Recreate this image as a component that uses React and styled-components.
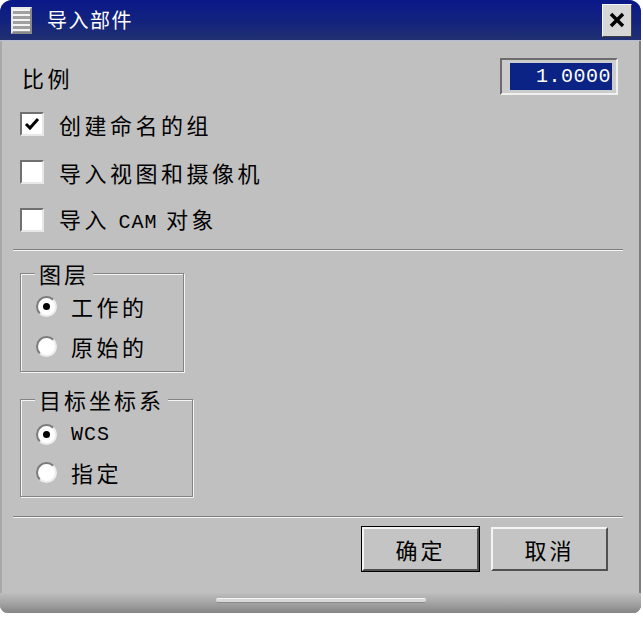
import React from 'react'
import styled, { createGlobalStyle } from 'styled-components'

const GlobalStyle = createGlobalStyle`
  body {
    margin: 0;
    background: #fff;
    font-family: "Noto Sans CJK SC", "Noto Sans", sans-serif;
  }
`

const Window = styled.div`
  width: 641px;
  height: 613px;
  display: flex;
  flex-direction: column;
  background: #c0c0c0;
  border-radius: 12px 12px 8px 8px;
  overflow: hidden;
  box-shadow: inset 2px 0 0 #a8a8a8, inset -2px 0 0 #7c7c7c;
`

const TitleBar = styled.div`
  height: 40px;
  display: flex;
  align-items: center;
  padding: 0 9px 0 11px;
  background: linear-gradient(180deg, #0a1889 0%, #13237d 55%, #213070 100%);
  border-bottom: 1px solid #b4bcd4;
`

const MenuIcon = styled.div`
  width: 21px;
  height: 27px;
  box-sizing: border-box;
  border: 2px solid #e8e8e8;
  border-right-color: #8a8a8a;
  border-bottom-color: #8a8a8a;
  background: repeating-linear-gradient(180deg, #f4f4f4 0 2px, #a0a0a0 2px 5px);
`

const Title = styled.span`
  margin-left: 15px;
  color: #fff;
  font-size: 20px;
  letter-spacing: 1.5px;
  line-height: 1;
`

const CloseButton = styled.div`
  margin-left: auto;
  width: 30px;
  height: 33px;
  box-sizing: border-box;
  display: flex;
  align-items: center;
  justify-content: center;
  background: #d6d6d6;
  border: 1px solid #f4f4f4;
  border-right-color: #404040;
  border-bottom-color: #404040;
`

const Body = styled.div`
  flex: 1;
  display: flex;
  flex-direction: column;
  padding-top: 17px;
`

const Text = styled.span`
  font-size: 22px;
  letter-spacing: 3.5px;
  color: #000;
  line-height: 22px;
`

const Mono = styled.span`
  font-family: "Liberation Mono", monospace;
  font-size: 20px;
  letter-spacing: 1px;
`

const ScaleRow = styled.div`
  height: 37px;
  display: flex;
  align-items: center;
  justify-content: space-between;
  padding: 0 23px 0 22px;
`

const NumberField = styled.div`
  width: 118px;
  height: 37px;
  box-sizing: border-box;
  padding: 3px 4px 3px 8px;
  display: flex;
  background: #cccccc;
  border: 2px solid #6c6c6c;
  border-right-color: #f0f0f0;
  border-bottom-color: #f0f0f0;
`

const Selection = styled.div`
  flex: 1;
  display: flex;
  align-items: center;
  justify-content: flex-end;
  padding-right: 1px;
  background: #0b2384;
  color: #fff;
  font-family: "Liberation Mono", monospace;
  font-size: 20px;
  letter-spacing: 0.5px;
`

const CheckList = styled.div`
  margin-top: 5px;
`

const CheckRow = styled.label`
  height: 48px;
  display: flex;
  align-items: center;
  gap: 15px;
  padding-left: 20px;
`

const Box = styled.span`
  width: 24px;
  height: 24px;
  box-sizing: border-box;
  display: flex;
  align-items: center;
  justify-content: center;
  background: #fff;
  border: 2px solid #707070;
  border-right-color: #e8e8e8;
  border-bottom-color: #e8e8e8;
`

const Separator = styled.div`
  margin: ${p => p.$top}px 18px 0 13px;
  height: 1px;
  background: #7e7e7e;
  border-bottom: 1px solid #f4f4f4;
`

const Group = styled.fieldset`
  margin: ${p => p.$top}px 0 0 20px;
  width: ${p => p.$width}px;
  box-sizing: border-box;
  padding: ${p => p.$pad}px 0 5px 15px;
  border: 1px solid #848484;
  box-shadow: inset 1px 1px 0 #f4f4f4, 1px 1px 0 #f4f4f4;
`

const Legend = styled.legend`
  margin-left: -1px;
  padding: 0 4px 0 4px;
  height: 22px;
  background: #c0c0c0;
  font-size: 22px;
  letter-spacing: 3px;
  line-height: 22px;
`

const RadioRow = styled.label`
  height: ${p => p.$h}px;
  display: flex;
  align-items: center;
  gap: 14px;
`

const Radio = styled.span`
  width: 21px;
  height: 21px;
  box-sizing: border-box;
  border-radius: 50%;
  display: flex;
  align-items: center;
  justify-content: center;
  background: #fff;
  border: 2px solid #ececec;
  border-top-color: #7a7a7a;
  border-left-color: #7a7a7a;

  &::after {
    content: '';
    width: 7px;
    height: 7px;
    border-radius: 50%;
    background: ${p => (p.$on ? '#000' : 'transparent')};
  }
`

const ButtonRow = styled.div`
  margin-top: 9px;
  display: flex;
  justify-content: flex-end;
  gap: 12px;
  padding-right: 33px;
`

const Button = styled.div`
  width: 117px;
  height: 44px;
  box-sizing: border-box;
  display: flex;
  align-items: center;
  justify-content: center;
  background: #c4c4c4;
  border: 2px solid #f4f4f4;
  border-right-color: #505050;
  border-bottom-color: #505050;
  outline: ${p => (p.$default ? '1px solid #000' : 'none')};
  font-size: 22px;
  letter-spacing: 3px;
`

const BottomBar = styled.div`
  margin-top: auto;
  height: 20px;
  display: flex;
  justify-content: center;
  background: linear-gradient(180deg, #bdbdbd 0%, #a4a4a4 50%, #858585 100%);
`

const Handle = styled.div`
  margin-top: 5px;
  width: 210px;
  height: 5px;
  border-radius: 2px;
  background: #d8d8d8;
  border-top: 1px solid #f4f4f4;
  border-bottom: 1px solid #8a8a8a;
  box-sizing: border-box;
`

const Check = () => (
  <svg width="16" height="16" viewBox="0 0 16 16">
    <polyline points="2,8 6,12 14,3" fill="none" stroke="#000" strokeWidth="3" />
  </svg>
)

const Cross = () => (
  <svg width="16" height="16" viewBox="0 0 16 16">
    <path d="M2 2 L14 14 M14 2 L2 14" stroke="#000" strokeWidth="3.5" />
  </svg>
)

const options = [
  { label: '创建命名的组', checked: true },
  { label: '导入视图和摄像机' },
  { label: <>导入 <Mono>CAM</Mono> 对象</> },
]

export default function App() {
  return (
    <>
      <GlobalStyle />
      <Window>
        <TitleBar>
          <MenuIcon />
          <Title>导入部件</Title>
          <CloseButton><Cross /></CloseButton>
        </TitleBar>
        <Body>
          <ScaleRow>
            <Text>比例</Text>
            <NumberField><Selection>1.0000</Selection></NumberField>
          </ScaleRow>
          <CheckList>
            {options.map((o, i) => (
              <CheckRow key={i}>
                <Box>{o.checked && <Check />}</Box>
                <Text>{o.label}</Text>
              </CheckRow>
            ))}
          </CheckList>
          <Separator $top={5} />
          <Group $top={11} $width={164} $pad={2}>
            <Legend>图层</Legend>
            <RadioRow $h={40}><Radio $on /><Text>工作的</Text></RadioRow>
            <RadioRow $h={40}><Radio /><Text>原始的</Text></RadioRow>
          </Group>
          <Group $top={16} $width={173} $pad={5}>
            <Legend>目标坐标系</Legend>
            <RadioRow $h={38}><Radio $on /><Mono>WCS</Mono></RadioRow>
            <RadioRow $h={38}><Radio /><Text>指定</Text></RadioRow>
          </Group>
          <Separator $top={19} />
          <ButtonRow>
            <Button $default>确定</Button>
            <Button>取消</Button>
          </ButtonRow>
          <BottomBar><Handle /></BottomBar>
        </Body>
      </Window>
    </>
  )
}
